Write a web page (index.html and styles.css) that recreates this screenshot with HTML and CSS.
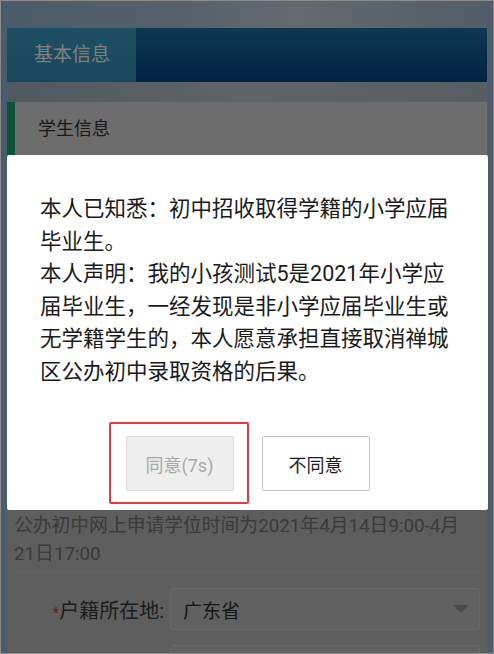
FILE: index.html
```html
<!DOCTYPE html>
<html lang="zh-CN">
<head>
    <meta charset="UTF-8">
    <meta name="viewport" content="width=device-width, initial-scale=1.0">
    <title>学位申请</title>
    <link rel="stylesheet" href="styles.css">
</head>
<body>
    <div class="page">
        <div class="banner"></div>
        <div class="wrap">
            <div class="tabs">
                <div class="tab active">基本信息</div>
                <div class="tab-rest"></div>
            </div>
            <div class="banner-strip"></div>
            <div class="section">
                <div class="section-head">学生信息</div>
                <div class="section-body">
                    <p class="notice">公办初中网上申请学位时间为2021年4月14日9:00-4月21日17:00</p>
                    <div class="form-row">
                        <label><span class="req">*</span>户籍所在地:</label>
                        <div class="select">
                            <span>广东省</span>
                            <i class="arrow"></i>
                        </div>
                    </div>
                    <div class="form-row">
                        <label></label>
                        <div class="select"></div>
                    </div>
                </div>
            </div>
        </div>

        <div class="mask"></div>

        <div class="dialog">
            <div class="dialog-text">
                <p>本人已知悉：初中招收取得学籍的小学应届毕业生。</p>
                <p>本人声明：我的小孩测试5是2021年小学应届毕业生，一经发现是非小学应届毕业生或无学籍学生的，本人愿意承担直接取消禅城区公办初中录取资格的后果。</p>
            </div>
            <div class="dialog-btns">
                <button class="btn disabled">同意(7s)</button>
                <button class="btn">不同意</button>
                <div class="mark"></div>
            </div>
        </div>
    </div>
</body>
</html>
```

FILE: styles.css
```css
* {
    margin: 0;
    padding: 0;
    box-sizing: border-box;
}

body {
    font-family: Roboto, "Noto Sans CJK SC", sans-serif;
    background-color: #777;
}

.page {
    position: relative;
    width: 494px;
    height: 654px;
    overflow: hidden;
    border: 1px solid #8c8c8c;
    background: linear-gradient(90deg, #94b6d2 0%, #afc4d8 40%, #c8d3dc 60%, #a0bad0 100%);
}

.banner {
    height: 27px;
}

.wrap {
    margin: 0 6px;
}

/* tabs */
.tabs {
    display: flex;
    height: 54px;
}

.tab {
    width: 129px;
    color: #fff;
    font-size: 19px;
    line-height: 54px;
    padding-left: 27px;
    background: linear-gradient(#3a9dc6, #2f8fb8);
}

.tab-rest {
    flex: 1;
    background: linear-gradient(#1c6fa6, #06468a);
}

.banner-strip {
    height: 20px;
    background: linear-gradient(90deg, #a0b2c2, #bec9d2 50%, #adbcc9);
}

/* section */
.section {
    background-color: #bcbcbc;
    height: 600px;
}

.section-head {
    height: 54px;
    line-height: 54px;
    padding-left: 23px;
    font-size: 18px;
    color: #333;
    background-color: #dadada;
    border-left: 8px solid #14a37c;
}

.section-body {
    padding: 0 7px;
}

.notice {
    margin-top: 356px;
    font-size: 18.8px;
    line-height: 28px;
    color: #747474;
    padding-bottom: 4px;
    border-bottom: 1px solid #c8c8c8;
}

.form-row {
    display: flex;
    align-items: center;
    margin-top: 15px;
}

.form-row label {
    width: 156px;
    text-align: right;
    padding-right: 6px;
    font-size: 20px;
    color: #3a3a3a;
}

.req {
    color: #e23a3a;
    font-size: 15px;
}

.select {
    flex: 1;
    height: 42px;
    border: 1px solid #d2d2d2;
    border-radius: 3px;
    background-color: #c2c2c2;
    display: flex;
    align-items: center;
    justify-content: space-between;
    padding: 0 10px 0 12px;
    font-size: 19px;
    color: #2a2a2a;
}

.arrow {
    width: 0;
    height: 0;
    border-left: 8px solid transparent;
    border-right: 8px solid transparent;
    border-top: 8px solid #959595;
}

/* dialog */
.mask {
    position: absolute;
    top: 0;
    left: 0;
    right: 0;
    bottom: 0;
    background-color: rgba(0, 0, 0, 0.5);
}

.dialog {
    position: absolute;
    top: 154px;
    left: 6px;
    width: 481px;
    height: 355px;
    background-color: #fff;
    border-radius: 2px;
    padding: 38px 33px 0 33px;
}

.dialog-text p {
    font-size: 21.5px;
    line-height: 32.5px;
    color: #1a1a1a;
}

.dialog-btns {
    position: relative;
    display: flex;
    justify-content: center;
    gap: 28px;
    margin-top: 48px;
}

.btn {
    width: 108px;
    height: 55px;
    font-family: Roboto, "Noto Sans CJK SC", sans-serif;
    font-size: 18px;
    color: #1a1a1a;
    background-color: #fff;
    border: 1px solid #c4c4c4;
    border-radius: 2px;
}

.btn.disabled {
    color: #a8a8a8;
    background-color: #eeeeee;
    border-color: #dddddd;
}

/* red annotation box */
.mark {
    position: absolute;
    top: -14px;
    left: 69px;
    width: 140px;
    height: 82px;
    border: 2px solid #e8393c;
    border-radius: 2px;
}
```
